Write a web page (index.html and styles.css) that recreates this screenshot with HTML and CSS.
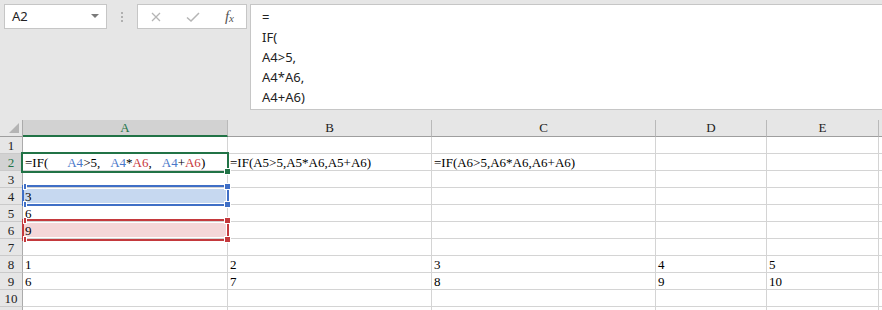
FILE: index.html
```html
<!DOCTYPE html>
<html lang="en">
<head>
    <meta charset="UTF-8">
    <title>Book1 - Excel</title>
    <link rel="stylesheet" href="styles.css">
</head>
<body>
    <div class="toolbar">
        <div class="name-box">
            <span>A2</span>
            <svg class="drop" width="8" height="5" viewBox="0 0 8 5"><path d="M0 0h8L4 4z" fill="#7a7a7a"/></svg>
        </div>
        <div class="grip"><i></i><i></i><i></i></div>
        <div class="fx-buttons">
            <svg width="10" height="10" viewBox="0 0 10 10"><path d="M1 1l8 8M9 1l-8 8" stroke="#b5b5b5" stroke-width="1.3" fill="none"/></svg>
            <svg width="14" height="10" viewBox="0 0 14 10"><path d="M1 5.5l4 3.5L13 1" stroke="#b5b5b5" stroke-width="1.5" fill="none"/></svg>
            <span class="fx">f<sub>x</sub></span>
        </div>
        <div class="formula-bar">=
IF(
A4&gt;5,
A4*A6,
A4+A6)</div>
    </div>

    <div class="sheet">
        <div class="grid">
            <div class="corner"><svg width="10" height="10" viewBox="0 0 10 10"><path d="M10 0v10H0z" fill="#b4b4b4"/></svg></div>
            <div class="col-head active">A</div>
            <div class="col-head">B</div>
            <div class="col-head">C</div>
            <div class="col-head">D</div>
            <div class="col-head">E</div>
            <div class="col-head rest"></div>

            <div class="row-head">1</div><div class="cell"></div><div class="cell"></div><div class="cell"></div><div class="cell"></div><div class="cell"></div><div class="cell rest"></div>

            <div class="row-head active">2</div>
            <div class="cell formula">=IF(<i class="gap wide"></i><b class="ref-a4">A4</b>&gt;5,<i class="gap"></i><b class="ref-a4">A4</b>*<b class="ref-a6">A6</b>,<i class="gap"></i><b class="ref-a4">A4</b>+<b class="ref-a6">A6</b>)</div>
            <div class="cell">=IF(A5&gt;5,A5*A6,A5+A6)</div>
            <div class="cell">=IF(A6&gt;5,A6*A6,A6+A6)</div>
            <div class="cell"></div><div class="cell"></div><div class="cell rest"></div>

            <div class="row-head">3</div><div class="cell"></div><div class="cell"></div><div class="cell"></div><div class="cell"></div><div class="cell"></div><div class="cell rest"></div>

            <div class="row-head">4</div><div class="cell fill-blue">3</div><div class="cell"></div><div class="cell"></div><div class="cell"></div><div class="cell"></div><div class="cell rest"></div>

            <div class="row-head">5</div><div class="cell">6</div><div class="cell"></div><div class="cell"></div><div class="cell"></div><div class="cell"></div><div class="cell rest"></div>

            <div class="row-head">6</div><div class="cell fill-red">9</div><div class="cell"></div><div class="cell"></div><div class="cell"></div><div class="cell"></div><div class="cell rest"></div>

            <div class="row-head">7</div><div class="cell"></div><div class="cell"></div><div class="cell"></div><div class="cell"></div><div class="cell"></div><div class="cell rest"></div>

            <div class="row-head">8</div><div class="cell">1</div><div class="cell">2</div><div class="cell">3</div><div class="cell">4</div><div class="cell">5</div><div class="cell rest"></div>

            <div class="row-head">9</div><div class="cell">6</div><div class="cell">7</div><div class="cell">8</div><div class="cell">9</div><div class="cell">10</div><div class="cell rest"></div>

            <div class="row-head">10</div><div class="cell"></div><div class="cell"></div><div class="cell"></div><div class="cell"></div><div class="cell"></div><div class="cell rest"></div>

            <div class="row-head"></div><div class="cell"></div><div class="cell"></div><div class="cell"></div><div class="cell"></div><div class="cell"></div><div class="cell rest"></div>
        </div>

        <!-- selection and reference outlines drawn over the grid -->
        <div class="outline active-cell"><span class="handle br"></span></div>
        <div class="outline range-blue">
            <span class="handle tl"></span><span class="handle tr"></span>
            <span class="handle bl"></span><span class="handle br"></span>
        </div>
        <div class="outline range-red">
            <span class="handle tl"></span><span class="handle tr"></span>
            <span class="handle bl"></span><span class="handle br"></span>
        </div>
    </div>
</body>
</html>
```

FILE: styles.css
```css
* {
    margin: 0;
    padding: 0;
    box-sizing: border-box;
}

body {
    background: #ffffff;
    width: 882px;
    height: 310px;
    overflow: hidden;
}

/* ---- formula bar strip ---- */

.toolbar {
    height: 120px;
    background: #e6e6e6;
    display: flex;
    align-items: flex-start;
    padding: 4px 0 0 4px;
    font-family: 'Noto Sans', 'Open Sans', sans-serif;
    font-size: 13px;
    color: #222;
}

.name-box {
    width: 103px;
    height: 25px;
    background: #fff;
    border: 1px solid #c6c6c6;
    display: flex;
    align-items: center;
    justify-content: space-between;
    padding: 0 7px 0 7px;
}

.name-box span {
    line-height: 23px;
}

.grip {
    width: 30px;
    display: flex;
    flex-direction: column;
    align-items: center;
    gap: 2px;
    padding-top: 8px;
}

.grip i {
    width: 2px;
    height: 2px;
    background: #b0b0b0;
}

.fx-buttons {
    width: 110px;
    height: 25px;
    background: #fff;
    border: 1px solid #c6c6c6;
    display: flex;
    align-items: center;
    justify-content: space-between;
    padding: 0 12px 0 13px;
}

.fx {
    font-family: 'Liberation Serif', serif;
    font-style: italic;
    font-size: 15px;
    color: #555;
    line-height: 1;
}

.fx sub {
    font-size: 11px;
    vertical-align: -1px;
}

.formula-bar {
    flex: 1;
    margin-left: 3px;
    margin-right: -10px;
    height: 106px;
    background: #fff;
    border: 1px solid #c6c6c6;
    padding: 2px 0 0 11px;
    line-height: 20px;
    white-space: pre;
}

/* ---- worksheet ---- */

.sheet {
    position: relative;
    font-family: 'Liberation Serif', 'Times New Roman', serif;
    font-size: 13px;
    color: #000;
}

.grid {
    display: grid;
    grid-template-columns: 23px 205px 204px 224px 111px 112px 1fr;
    grid-auto-rows: 17px;
}

.corner {
    background: #e6e6e6;
    border-right: 1px solid #ababab;
    border-bottom: 1px solid #9e9e9e;
    display: flex;
    align-items: flex-end;
    justify-content: flex-end;
    padding: 0 3px 3px 0;
}

.col-head {
    background: #e6e6e6;
    border-right: 1px solid #b9b9b9;
    border-bottom: 1px solid #9e9e9e;
    text-align: center;
    line-height: 16px;
    color: #222;
}

.col-head.active {
    background: #d2d2d2;
    color: #217346;
    border-bottom: 2px solid #217346;
}

.col-head.rest {
    border-right: none;
}

.row-head {
    background: #e6e6e6;
    border-right: 1px solid #ababab;
    border-bottom: 1px solid #cacaca;
    text-align: center;
    line-height: 16px;
    padding-top: 1px;
    color: #222;
}

.row-head.active {
    background: #d2d2d2;
    color: #217346;
}

.cell {
    border-right: 1px solid #d4d4d4;
    border-bottom: 1px solid #d4d4d4;
    line-height: 16px;
    padding: 1px 0 0 2px;
    white-space: nowrap;
}

.cell.rest {
    border-right: none;
}

.formula b {
    font-weight: normal;
}

.gap {
    display: inline-block;
    width: 10px;
}

.gap.wide {
    width: 19px;
}

.ref-a4 { color: #4a78c9; }
.ref-a6 { color: #c8373c; }

.fill-blue {
    background: #c6d8f0;
    box-shadow: inset 1px 1px 0 #fff, inset -1px -1px 0 #fff;
}

.fill-red {
    background: #f4d6d8;
    box-shadow: inset 1px 1px 0 #fff, inset -1px -1px 0 #fff;
}

.outline {
    position: absolute;
    border: 2px solid;
    pointer-events: none;
}

.active-cell {
    left: 21px;
    top: 32px;
    width: 208px;
    height: 21px;
    border-color: #217346;
}

.range-blue {
    left: 22px;
    top: 65px;
    width: 207px;
    height: 21px;
    border-color: #3f6fc6;
}

.range-red {
    left: 22px;
    top: 99px;
    width: 207px;
    height: 22px;
    border-color: #c4393d;
}

.handle {
    position: absolute;
    width: 7px;
    height: 7px;
    border: 1px solid #fff;
}

.active-cell .handle { background: #217346; }
.range-blue .handle { background: #3f6fc6; }
.range-red .handle { background: #c4393d; }

.handle.br { right: -4px; bottom: -4px; }
.handle.tr { right: -4px; top: -4px; }
.handle.tl { left: -1px; top: -4px; width: 4px; }
.handle.bl { left: -1px; bottom: -4px; width: 4px; }
```
